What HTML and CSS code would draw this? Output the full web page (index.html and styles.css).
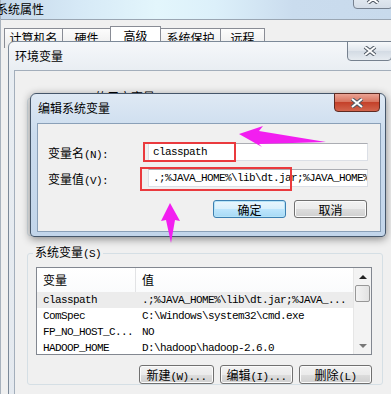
FILE: index.html
```html
<!DOCTYPE html>
<html lang="zh-CN">
<head>
<meta charset="UTF-8">
<title>编辑系统变量</title>
<link rel="stylesheet" href="styles.css">
</head>
<body>
    <!-- 系统属性 (底层窗口) -->
    <div class="win sys">
        <div class="sys-bar">系统属性</div>
        <div class="close sys-close">
            <svg width="14" height="10" viewBox="0 0 14 10"><path class="x-out" d="M2 1 L12 9 M12 1 L2 9"/><path class="x-in" d="M2 1 L12 9 M12 1 L2 9"/></svg>
        </div>
        <div class="tabs">
            <span class="tab">计算机名</span>
            <span class="tab">硬件</span>
            <span class="tab on">高级</span>
            <span class="tab">系统保护</span>
            <span class="tab">远程</span>
        </div>
    </div>

    <!-- 环境变量 -->
    <div class="win env">
        <div class="env-title">环境变量</div>
        <div class="close env-close">
            <svg width="14" height="10" viewBox="0 0 14 10"><path class="x-out" d="M2 1 L12 9 M12 1 L2 9"/><path class="x-in" d="M2 1 L12 9 M12 1 L2 9"/></svg>
        </div>
        <div class="env-client">
            <fieldset class="group user">
                <legend><span class="m">useradmin </span>的用户变量<span class="m">(U)</span></legend>
            </fieldset>
            <fieldset class="group">
                <legend>系统变量<span class="m">(S)</span></legend>
                <div class="list">
                    <div class="list-main">
                        <div class="head"><span>变量</span><span>值</span></div>
                        <div class="row sel"><span class="m">classpath</span><span class="m">.;%JAVA_HOME%\lib\dt.jar;%JAVA_...</span></div>
                        <div class="row"><span class="m">ComSpec</span><span class="m">C:\Windows\system32\cmd.exe</span></div>
                        <div class="row"><span class="m">FP_NO_HOST_C...</span><span class="m">NO</span></div>
                        <div class="row"><span class="m">HADOOP_HOME</span><span class="m">D:\hadoop\hadoop-2.6.0</span></div>
                    </div>
                    <div class="sb">
                        <div class="sb-btn"><i class="up"></i></div>
                        <div class="sb-thumb"></div>
                        <div class="sb-track"></div>
                        <div class="sb-btn"><i class="down"></i></div>
                    </div>
                </div>
                <div class="btns">
                    <button class="btn w75">新建<span class="m">(W)...</span></button>
                    <button class="btn">编辑<span class="m">(I)...</span></button>
                    <button class="btn">删除<span class="m">(L)</span></button>
                </div>
            </fieldset>
        </div>
    </div>

    <!-- 编辑系统变量 -->
    <div class="win edit">
        <div class="edit-title">编辑系统变量</div>
        <div class="close red-close">
            <svg width="14" height="10" viewBox="0 0 14 10"><path class="x-out" d="M2 1 L12 9 M12 1 L2 9"/><path class="x-in" d="M2 1 L12 9 M12 1 L2 9"/></svg>
        </div>
        <div class="edit-client">
            <div class="form">
                <label>变量名<span class="m">(N):</span></label>
                <div class="input m">classpath</div>
                <label>变量值<span class="m">(V):</span></label>
                <div class="input m">.;%JAVA_HOME%\lib\dt.jar;%JAVA_HOME%\lib\tools.jar</div>
            </div>
            <div class="actions">
                <button class="btn def">确定</button>
                <button class="btn">取消</button>
            </div>
        </div>
    </div>

    <!-- 标注 -->
    <div class="mark mark-name"></div>
    <div class="mark mark-value"></div>
    <svg class="arrows" width="391" height="394">
        <polygon points="239,134 263,126 259,131 326,142 259,144 262,147"/>
        <polygon points="170,203 180,221 175,220 171,243 166,220 161,221"/>
    </svg>
</body>
</html>
```

FILE: styles.css
```css
body {
    margin: 0;
    width: 391px;
    height: 394px;
    overflow: hidden;
    position: relative;
    background: #f0f0f0;
    font-family: "Noto Sans CJK SC", sans-serif;
    font-size: 12px;
    color: #000;
}
.m {
    font-family: "Liberation Mono", "Noto Sans CJK SC", monospace;
    font-size: 11px;
    letter-spacing: -0.6px;
}
.win {
    position: absolute;
    box-sizing: border-box;
}

/* close buttons */
.close {
    position: absolute;
    display: flex;
    align-items: center;
    justify-content: center;
    box-sizing: border-box;
    border: 1px solid #76818f;
    border-radius: 0 0 4px 4px;
    background: linear-gradient(#f7f9fb, #dfe5ec 50%, #d3dbe4 51%, #e6ebf0);
}
.close svg { display: block; }
.x-out { stroke: #4f5863; stroke-width: 4; fill: none; }
.x-in { stroke: #fdfdfd; stroke-width: 2; fill: none; }

/* 系统属性 */
.sys {
    left: 0;
    top: 0;
    width: 391px;
    height: 394px;
    border-left: 1px solid #a8b2bd;
}
.sys-bar {
    height: 19px;
    line-height: 17px;
    text-indent: -5px;
    border-bottom: 1px solid #9aa6b3;
    background: linear-gradient(90deg, #c6d8ea 0, #d6e9f6 20%, #e3f6fc 40%, #dcf0fa 55%, #cadcee 75%, #c8daec 100%);
}
.sys-close {
    right: -2px;
    top: -11px;
    width: 40px;
    height: 20px;
    background: linear-gradient(#eef3f8, #d4dde7);
}
.tabs {
    display: flex;
    align-items: flex-end;
    margin-top: 6px;
    padding-left: 3px;
}
.tab {
    box-sizing: border-box;
    height: 20px;
    line-height: 18px;
    text-align: center;
    border: 1px solid #898c95;
    border-bottom: none;
    margin-right: -1px;
    background: linear-gradient(#fcfcfc, #ebebeb);
}
.tab:nth-child(1) { width: 59px; }
.tab:nth-child(2) { width: 49px; }
.tab:nth-child(3) { width: 51px; }
.tab:nth-child(4) { width: 61px; }
.tab:nth-child(5) { width: 45px; }
.tab.on {
    height: 22px;
    background: #fff;
}

/* 环境变量 */
.env {
    left: 8px;
    top: 41px;
    width: 392px;
    height: 370px;
    padding: 0 5px;
    border: 1px solid #7c8998;
    border-radius: 6px 6px 0 0;
    background: linear-gradient(#f5f7fa, #e8edf2 30px, #e4e9ef);
}
.env-title {
    height: 28px;
    line-height: 27px;
    padding-left: 1px;
}
.env-close {
    left: 338px;
    top: -1px;
    width: 45px;
    height: 20px;
}
.env-client {
    height: 330px;
    box-sizing: border-box;
    padding: 19px 0 0 12px;
    border: 1px solid #a3aebb;
    background: #f0f0f0;
}
.group {
    box-sizing: border-box;
    width: 356px;
    margin: 0;
    padding: 6px 10px 0 8px;
    border: 1px solid #d5dfe5;
    border-radius: 3px;
    min-width: 0;
}
.group legend {
    padding: 0 2px;
    margin-left: -3px;
    line-height: 14px;
}
.group.user {
    height: 146px;
    margin-bottom: 9px;
}

.list {
    display: flex;
    height: 88px;
    box-sizing: border-box;
    border: 1px solid #828790;
    background: #fff;
}
.list-main {
    flex: 1;
    overflow: hidden;
}
.head, .row {
    display: grid;
    grid-template-columns: 99px 1fr;
    white-space: nowrap;
}
.head {
    height: 24px;
    line-height: 24px;
    background: linear-gradient(#fff, #fafbfc);
}
.head span:first-child { border-right: 1px solid #e2e3e5; }
.head span, .row span {
    padding-left: 6px;
    overflow: hidden;
}
.row {
    height: 16px;
    line-height: 16px;
}
.row.sel { background: #ececec; }
.sb {
    width: 17px;
    display: flex;
    flex-direction: column;
    background: #f3f3f3;
    border-left: 1px solid #e6e6e6;
}
.sb-btn {
    height: 17px;
    display: flex;
    align-items: center;
    justify-content: center;
}
.sb-thumb {
    height: 15px;
    margin: 0 1px;
    border: 1px solid #979797;
    border-radius: 2px;
    background: linear-gradient(90deg, #f3f3f3, #e2e2e2);
}
.sb-track { flex: 1; }
.up, .down {
    width: 0;
    height: 0;
    border-left: 4px solid transparent;
    border-right: 4px solid transparent;
}
.up { border-bottom: 4px solid #222; }
.down { border-top: 4px solid #777; }

.btns {
    display: flex;
    justify-content: flex-end;
    gap: 6px;
    margin-top: 10px;
}
.btn {
    box-sizing: border-box;
    width: 73px;
    height: 19px;
    padding: 0;
    font-family: "Noto Sans CJK SC", sans-serif;
    font-size: 12px;
    color: #000;
    border: 1px solid #707070;
    border-radius: 3px;
    background: linear-gradient(#f2f2f2, #ebebeb 50%, #dddddd 51%, #cfcfcf);
    box-shadow: inset 0 0 0 1px #fbfbfb;
}
.btn.w75 { width: 75px; }
.btn.def {
    border-color: #3c7fb1;
    background: linear-gradient(#eaf6fd, #d9f0fc 50%, #bee6fd 51%, #a7d9f5);
    box-shadow: inset 0 0 0 1px #b6e4f8;
}

/* 编辑系统变量 */
.edit {
    left: 30px;
    top: 93px;
    width: 356px;
    height: 144px;
    padding: 0 4px 0 6px;
    border: 1px solid #45566a;
    border-radius: 6px 6px 4px 4px;
    background: linear-gradient(#dfe9f4, #cbdcee 40px, #c2d5ea);
    box-shadow: 0 2px 9px rgba(0, 0, 0, 0.45);
}
.edit-title {
    height: 29px;
    line-height: 28px;
    padding-left: 1px;
}
.red-close {
    left: 303px;
    top: -1px;
    width: 46px;
    height: 19px;
    border-color: #5e2a22;
    background: linear-gradient(#eba394, #d7745f 45%, #c4412a 50%, #d2644c);
}
.edit-client {
    height: 109px;
    box-sizing: border-box;
    padding: 19px 13px 0 10px;
    border: 1px solid #8aa0b8;
    background: #f0f0f0;
}
.form {
    display: grid;
    grid-template-columns: 100px 220px;
    row-gap: 8px;
    align-items: center;
}
.input {
    box-sizing: border-box;
    height: 18px;
    line-height: 16px;
    padding-left: 4px;
    white-space: nowrap;
    overflow: hidden;
    background: #fff;
    border: 1px solid #dbdfe6;
    border-top-color: #abadb3;
}
.actions {
    display: flex;
    justify-content: flex-end;
    gap: 8px;
    margin-top: 13px;
}
.actions .btn { height: 18px; }

/* 标注 */
.mark {
    position: absolute;
    box-sizing: border-box;
    border: 2px solid #ea3a3e;
}
.mark-name {
    left: 143px;
    top: 142px;
    width: 93px;
    height: 20px;
}
.mark-value {
    left: 140px;
    top: 167px;
    width: 152px;
    height: 24px;
}
.arrows {
    position: absolute;
    left: 0;
    top: 0;
    pointer-events: none;
}
.arrows polygon { fill: #f21ef0; }
```
